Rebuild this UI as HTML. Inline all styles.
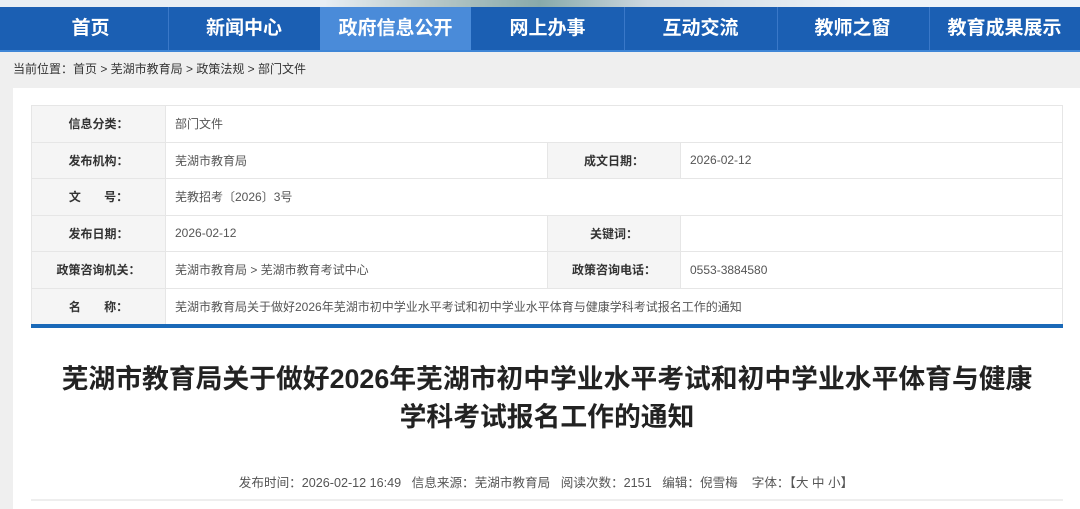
<!DOCTYPE html>
<html><head><meta charset="utf-8"><style>
*{margin:0;padding:0;box-sizing:border-box}
body{width:1080px;height:509px;overflow:hidden;background:#efefef;font-family:"Liberation Sans","Noto Sans CJK SC",sans-serif;position:relative}
.top{position:absolute;left:0;top:0;width:1080px;height:7px;background:linear-gradient(90deg,#e8eef4 0%,#e8eef4 30%,#b8c8c8 40%,#8aa 50%,#cdd8e0 60%,#eef3f8 80%,#eef3f8 100%)}
.nav{position:absolute;left:0;top:7px;width:1080px;height:45px;background:#1b5fb3;border-bottom:2px solid #3f86d6}
.nav div{position:absolute;top:0;height:43px;line-height:43px;color:#fff;font-weight:bold;font-size:19px;text-align:center}
.nav .act{background:#4a8bd9}
.sep{position:absolute;top:10px;width:1px;height:24px;background:#3a78c8}
.bc{position:absolute;left:0;top:52px;width:1080px;height:36px;background:#efefef;font-size:12px;color:#333;line-height:34px;padding-left:13px}
.main{position:absolute;left:13px;top:88px;width:1067px;height:421px;background:#fff}
table{position:absolute;left:31px;top:105px;width:1032px;border-collapse:collapse;font-size:12px}
td{border:1px solid #e6e6e6;height:36.5px;color:#555;padding-left:9px}
td.l{background:#f5f5f5;color:#333;font-weight:bold;text-align:center;padding:0}
.bar{position:absolute;left:31px;top:324px;width:1032px;height:4px;background:#1a69b8}
h1{position:absolute;left:31px;top:360px;width:1032px;text-align:center;font-size:26.8px;line-height:38px;color:#222;font-weight:bold}
.meta{position:absolute;left:0;top:472px;width:1080px;text-align:center;font-size:12.6px;color:#555;padding-left:12px}
.hr{position:absolute;left:31px;top:499px;width:1032px;height:2px;background:#eee}
</style></head><body>
<div class="top"></div>
<div class="nav">
<div style="left:14px;width:153px">首页</div>
<div class="sep" style="left:168px"></div>
<div style="left:168px;width:152px">新闻中心</div>
<div class="act" style="left:320px;width:151px">政府信息公开</div>
<div style="left:471px;width:153px">网上办事</div>
<div class="sep" style="left:624px"></div>
<div style="left:624px;width:153px">互动交流</div>
<div class="sep" style="left:777px"></div>
<div style="left:777px;width:151px">教师之窗</div>
<div class="sep" style="left:929px"></div>
<div style="left:929px;width:151px">教育成果展示</div>
</div>
<div class="bc">当前位置：首页 &gt; 芜湖市教育局 &gt; 政策法规 &gt; 部门文件</div>
<div class="main"></div>
<table>
<colgroup><col style="width:134px"><col style="width:382px"><col style="width:133px"><col></colgroup>
<tr><td class="l">信息分类：</td><td colspan="3">部门文件</td></tr>
<tr><td class="l">发布机构：</td><td>芜湖市教育局</td><td class="l">成文日期：</td><td>2026-02-12</td></tr>
<tr><td class="l">文&nbsp;&nbsp;&nbsp;&nbsp;&nbsp;&nbsp;&nbsp;号：</td><td colspan="3">芜教招考〔2026〕3号</td></tr>
<tr><td class="l">发布日期：</td><td>2026-02-12</td><td class="l">关键词：</td><td></td></tr>
<tr><td class="l">政策咨询机关：</td><td>芜湖市教育局 &gt; 芜湖市教育考试中心</td><td class="l">政策咨询电话：</td><td>0553-3884580</td></tr>
<tr><td class="l">名&nbsp;&nbsp;&nbsp;&nbsp;&nbsp;&nbsp;&nbsp;称：</td><td colspan="3">芜湖市教育局关于做好2026年芜湖市初中学业水平考试和初中学业水平体育与健康学科考试报名工作的通知</td></tr>
</table>
<div class="bar"></div>
<h1>芜湖市教育局关于做好2026年芜湖市初中学业水平考试和初中学业水平体育与健康<br>学科考试报名工作的通知</h1>
<div class="meta">发布时间：2026-02-12 16:49&nbsp;&nbsp;&nbsp;信息来源：芜湖市教育局&nbsp;&nbsp;&nbsp;阅读次数：2151&nbsp;&nbsp;&nbsp;编辑：倪雪梅&nbsp;&nbsp;&nbsp;&nbsp;字体：【大 中 小】</div>
<div class="hr"></div>
</body></html>
